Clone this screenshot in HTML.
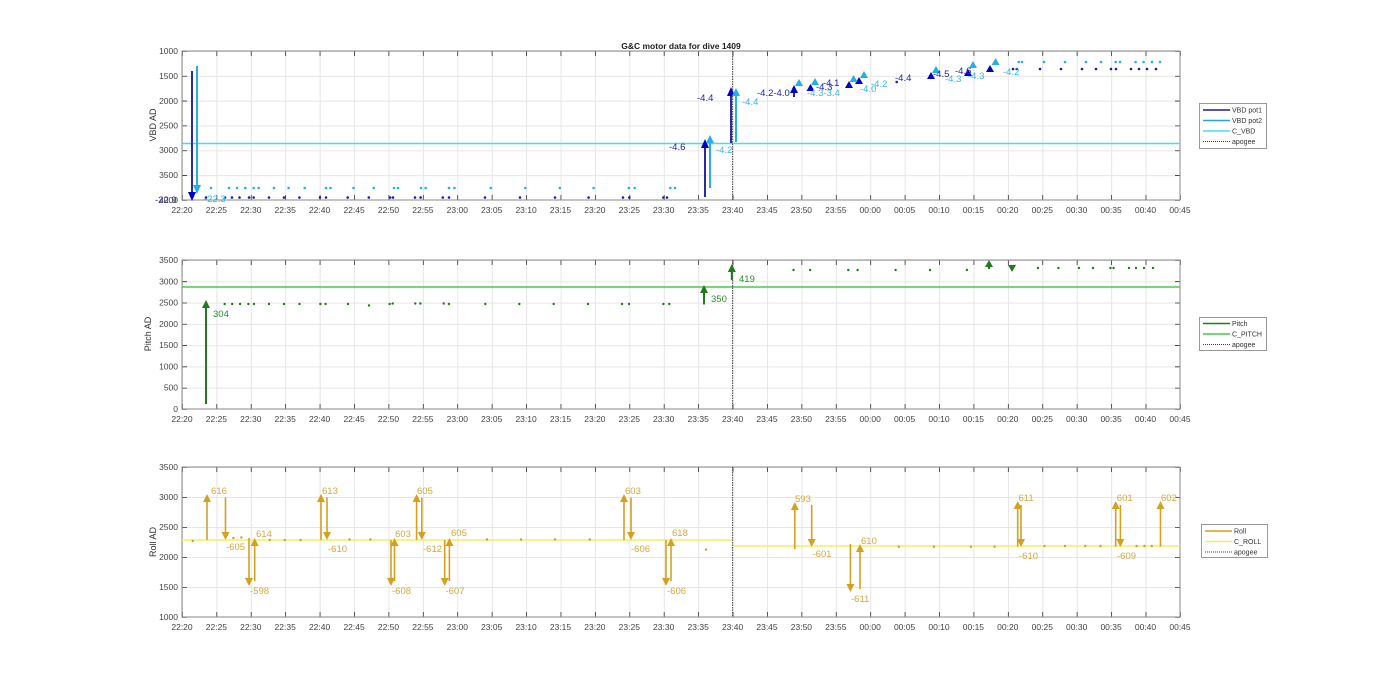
<!DOCTYPE html>
<html><head><meta charset="utf-8"><style>
html,body{margin:0;padding:0;background:#fff;}
svg{display:block;font-family:"Liberation Sans",sans-serif;}
.t{font-size:8.5px;fill:#444;text-anchor:middle}
.yl{font-size:8.5px;fill:#444;text-anchor:end}
.g{stroke:#e4e4e4;stroke-width:1}
</style></head><body>
<svg width="1400" height="693" viewBox="0 0 1400 693" xmlns="http://www.w3.org/2000/svg">
<defs>
<pattern id="vg" x="182" y="0" width="34.4138" height="693" patternUnits="userSpaceOnUse"><line x1="0.5" y1="0" x2="0.5" y2="693" stroke="#e6e6e6" stroke-width="1"/></pattern>
<pattern id="hg1" x="0" y="51" width="1400" height="24.833" patternUnits="userSpaceOnUse"><line x1="0" y1="0.5" x2="1400" y2="0.5" stroke="#e6e6e6"/></pattern>
<pattern id="hg2" x="0" y="260" width="1400" height="21.286" patternUnits="userSpaceOnUse"><line x1="0" y1="0.5" x2="1400" y2="0.5" stroke="#e6e6e6"/></pattern>
<pattern id="hg3" x="0" y="467" width="1400" height="30" patternUnits="userSpaceOnUse"><line x1="0" y1="0.5" x2="1400" y2="0.5" stroke="#e6e6e6"/></pattern>
</defs>
<rect width="1400" height="693" fill="#fff"/>

<!-- ===== TOP AXES ===== -->
<rect x="182" y="51" width="998" height="149" fill="url(#vg)"/>
<rect x="182" y="51" width="998" height="149" fill="url(#hg1)"/>
<line x1="182" y1="197.5" x2="1181" y2="197.5" stroke="#333" stroke-width="5" stroke-dasharray="0.8 33.6138"/>
<line x1="182" y1="53.5" x2="1181" y2="53.5" stroke="#333" stroke-width="5" stroke-dasharray="0.8 33.6138"/>
<line x1="184.5" y1="51" x2="184.5" y2="201" stroke="#333" stroke-width="5" stroke-dasharray="0.8 24.033"/>
<line x1="1177.5" y1="51" x2="1177.5" y2="201" stroke="#333" stroke-width="5" stroke-dasharray="0.8 24.033"/>
<rect x="182" y="51" width="998" height="149" fill="none" stroke="#8a8a8a" stroke-width="1"/>
<text x="681" y="49" font-size="8.5" font-weight="bold" fill="#222" text-anchor="middle">G&amp;C motor data for dive 1409</text>
<line x1="182" y1="143.5" x2="1180" y2="143.5" stroke="#40e0e8" stroke-width="1.5"/>
<line x1="732.6" y1="51" x2="732.6" y2="200" stroke="#444" stroke-width="1" stroke-dasharray="1.5 1"/>
<g fill="#1c1c9c">
<circle cx="206" cy="197.5" r="1.3"/><circle cx="225" cy="197.5" r="1.3"/><circle cx="232" cy="197.5" r="1.3"/><circle cx="239.5" cy="197.5" r="1.3"/><circle cx="249" cy="197.5" r="1.3"/><circle cx="253.7" cy="197.5" r="1.3"/><circle cx="269" cy="197.5" r="1.3"/><circle cx="284" cy="197.5" r="1.3"/><circle cx="299.4" cy="197.5" r="1.3"/><circle cx="320" cy="197.5" r="1.3"/><circle cx="326" cy="197.5" r="1.3"/><circle cx="347.7" cy="197.5" r="1.3"/><circle cx="368.8" cy="197.5" r="1.3"/><circle cx="390" cy="197.5" r="1.3"/><circle cx="393" cy="197.5" r="1.3"/><circle cx="415" cy="197.5" r="1.3"/><circle cx="420.6" cy="197.5" r="1.3"/><circle cx="442.8" cy="197.5" r="1.3"/><circle cx="449" cy="197.5" r="1.3"/><circle cx="485" cy="197.5" r="1.3"/><circle cx="520" cy="197.5" r="1.3"/><circle cx="555" cy="197.5" r="1.3"/><circle cx="588.6" cy="197.5" r="1.3"/><circle cx="623" cy="197.5" r="1.3"/><circle cx="629.3" cy="197.5" r="1.3"/><circle cx="663.4" cy="197.5" r="1.3"/><circle cx="667" cy="197.5" r="1.3"/>
<circle cx="896.7" cy="82" r="1.3"/>
<circle cx="1013" cy="69" r="1.3"/><circle cx="1016.8" cy="69" r="1.3"/><circle cx="1040" cy="69" r="1.3"/><circle cx="1061" cy="69" r="1.3"/><circle cx="1082" cy="69" r="1.3"/><circle cx="1096" cy="69" r="1.3"/><circle cx="1111" cy="69" r="1.3"/><circle cx="1116" cy="69" r="1.3"/><circle cx="1131" cy="69" r="1.3"/><circle cx="1139" cy="69" r="1.3"/><circle cx="1147" cy="69" r="1.3"/><circle cx="1156" cy="69" r="1.3"/>
</g>
<g fill="#22b0e8">
<circle cx="211" cy="188" r="1.3"/><circle cx="229" cy="188" r="1.3"/><circle cx="237" cy="188" r="1.3"/><circle cx="245.3" cy="188" r="1.3"/><circle cx="253.7" cy="188" r="1.3"/><circle cx="258.7" cy="188" r="1.3"/><circle cx="274" cy="188" r="1.3"/><circle cx="288.6" cy="188" r="1.3"/><circle cx="304.7" cy="188" r="1.3"/><circle cx="326" cy="188" r="1.3"/><circle cx="330.5" cy="188" r="1.3"/><circle cx="353.5" cy="188" r="1.3"/><circle cx="373.8" cy="188" r="1.3"/><circle cx="394" cy="188" r="1.3"/><circle cx="398" cy="188" r="1.3"/><circle cx="421" cy="188" r="1.3"/><circle cx="425.6" cy="188" r="1.3"/><circle cx="449" cy="188" r="1.3"/><circle cx="454.5" cy="188" r="1.3"/><circle cx="490.8" cy="188" r="1.3"/><circle cx="525.3" cy="188" r="1.3"/><circle cx="559.8" cy="188" r="1.3"/><circle cx="593.6" cy="188" r="1.3"/><circle cx="628.9" cy="188" r="1.3"/><circle cx="634.7" cy="188" r="1.3"/><circle cx="670.4" cy="188" r="1.3"/><circle cx="675" cy="188" r="1.3"/>
<circle cx="1018.7" cy="62" r="1.3"/><circle cx="1022" cy="62" r="1.3"/><circle cx="1044" cy="62" r="1.3"/><circle cx="1065" cy="62" r="1.3"/><circle cx="1086" cy="62" r="1.3"/><circle cx="1101" cy="62" r="1.3"/><circle cx="1115.7" cy="62" r="1.3"/><circle cx="1120" cy="62" r="1.3"/><circle cx="1135.6" cy="62" r="1.3"/><circle cx="1143.6" cy="62" r="1.3"/><circle cx="1152" cy="62" r="1.3"/><circle cx="1160" cy="62" r="1.3"/>
</g>
<!-- VBD arrows -->
<g stroke="#2a2aa8" stroke-width="2">
<line x1="192" y1="71" x2="192" y2="193"/>
<line x1="705" y1="197" x2="705" y2="147"/>
<line x1="731" y1="143" x2="731" y2="95"/>
<line x1="794" y1="97" x2="794" y2="92"/>
</g>
<g stroke="#22b0e8" stroke-width="2">
<line x1="197" y1="66" x2="197" y2="186"/>
<line x1="710" y1="188" x2="710" y2="142"/>
<line x1="736" y1="142" x2="736" y2="95"/>
</g>
<g fill="#0000c8">
<polygon points="188,192 192,201 196,192"/>
<polygon points="701,148 705,139 709,148"/>
<polygon points="727,96 731,87 735,96"/>
<polygon points="790,93 794,85 798,93"/>
<polygon points="806.5,91 810.5,84 814.5,91"/>
<polygon points="845,88 849,81 853,88"/>
<polygon points="855,84 859,77 863,84"/>
<polygon points="927,79 931,72 935,79"/>
<polygon points="964,76 968,69 972,76"/>
<polygon points="986,72 990,65 994,72"/>
</g>
<g fill="#22b0e8">
<polygon points="193,185 197,194 201,185"/>
<polygon points="706,143 710,135 714,143"/>
<polygon points="732,96 736,88 740,96"/>
<polygon points="795,86 799,79 803,86"/>
<polygon points="811,85 815,78 819,85"/>
<polygon points="849.6,82 853.6,75 857.6,82"/>
<polygon points="860,78 864,71 868,78"/>
<polygon points="932,73 936,66 940,73"/>
<polygon points="969,68 973,61 977,68"/>
<polygon points="991.6,65 995.6,58 999.6,65"/>
</g>
<g font-size="9.5" fill="#2020b0">
<text x="155" y="203">-22.9</text>
<text x="669" y="150">-4.6</text>
<text x="697" y="101">-4.4</text>
<text x="757" y="96">-4.2-4.0</text>
<text x="816" y="90">-4.3</text>
<text x="823" y="86">-4.1</text>
<text x="895" y="81">-4.4</text>
<text x="933" y="77">-4.5</text>
<text x="955" y="74">-4.6</text>
</g>
<g font-size="9.5" fill="#30b8ec">
<text x="204" y="202">-22.3</text>
<text x="716" y="153">-4.2</text>
<text x="742" y="105">-4.4</text>
<text x="807" y="96">-4.3-3.4</text>
<text x="860" y="92">-4.0</text>
<text x="871" y="87">-4.2</text>
<text x="945" y="82">-4.3</text>
<text x="968" y="79">-4.3</text>
<text x="1003" y="75">-4.2</text>
</g>
<text x="0" y="0" font-size="9" fill="#333" text-anchor="middle" transform="translate(156,125) rotate(-90)">VBD AD</text>
<g class="yl">
<text x="178" y="54">1000</text><text x="178" y="79">1500</text><text x="178" y="104">2000</text><text x="178" y="128.5">2500</text><text x="178" y="153">3000</text><text x="178" y="178">3500</text><text x="178" y="203">4000</text>
</g>

<!-- legend 1 -->
<rect x="1199.5" y="103.5" width="67" height="45" fill="#fff" stroke="#999"/>
<line x1="1203" y1="110" x2="1230" y2="110" stroke="#1c1c8c" stroke-width="1.5"/>
<line x1="1203" y1="120.5" x2="1230" y2="120.5" stroke="#2aa0e0" stroke-width="1.5"/>
<line x1="1203" y1="131" x2="1230" y2="131" stroke="#40e0e8" stroke-width="1.5"/>
<line x1="1203" y1="141.5" x2="1230" y2="141.5" stroke="#444" stroke-width="1" stroke-dasharray="1 1"/>
<g font-size="7" fill="#333"><text x="1232" y="112.5">VBD pot1</text><text x="1232" y="123">VBD pot2</text><text x="1232" y="133.5">C_VBD</text><text x="1232" y="144">apogee</text></g>

<!-- ===== MIDDLE AXES ===== -->
<rect x="182" y="260" width="998" height="149" fill="url(#vg)"/>
<rect x="182" y="260" width="998" height="149" fill="url(#hg2)"/>
<line x1="182" y1="406.5" x2="1181" y2="406.5" stroke="#333" stroke-width="5" stroke-dasharray="0.8 33.6138"/>
<line x1="182" y1="262.5" x2="1181" y2="262.5" stroke="#333" stroke-width="5" stroke-dasharray="0.8 33.6138"/>
<line x1="184.5" y1="260" x2="184.5" y2="410" stroke="#333" stroke-width="5" stroke-dasharray="0.8 20.486"/>
<line x1="1177.5" y1="260" x2="1177.5" y2="410" stroke="#333" stroke-width="5" stroke-dasharray="0.8 20.486"/>
<rect x="182" y="260" width="998" height="149" fill="none" stroke="#8a8a8a" stroke-width="1"/>
<line x1="182" y1="287" x2="1180" y2="287" stroke="#40d040" stroke-width="1.5"/>
<line x1="732.6" y1="260" x2="732.6" y2="409" stroke="#444" stroke-width="1" stroke-dasharray="1.5 1"/>
<g fill="#1e7b1e">
<circle cx="224.7" cy="304" r="1.2"/><circle cx="232.2" cy="304" r="1.2"/><circle cx="240.1" cy="304" r="1.2"/><circle cx="248.4" cy="304" r="1.2"/><circle cx="254" cy="304" r="1.2"/><circle cx="269" cy="304" r="1.2"/><circle cx="284" cy="304" r="1.2"/><circle cx="299.5" cy="304" r="1.2"/><circle cx="320.4" cy="304" r="1.2"/><circle cx="325.6" cy="304" r="1.2"/><circle cx="348" cy="304" r="1.2"/><circle cx="369" cy="305.5" r="1.2"/><circle cx="389.6" cy="304" r="1.2"/><circle cx="392.7" cy="303.5" r="1.2"/><circle cx="415.3" cy="303.5" r="1.2"/><circle cx="420.4" cy="303.5" r="1.2"/><circle cx="443.7" cy="303.5" r="1.2"/><circle cx="448.9" cy="304" r="1.2"/><circle cx="485.3" cy="304" r="1.2"/><circle cx="519.3" cy="304" r="1.2"/><circle cx="553.7" cy="304" r="1.2"/><circle cx="588" cy="304" r="1.2"/><circle cx="622" cy="304" r="1.2"/><circle cx="629" cy="304" r="1.2"/><circle cx="663.4" cy="304" r="1.2"/><circle cx="669.3" cy="304" r="1.2"/>
<circle cx="793.5" cy="270" r="1.2"/><circle cx="810.2" cy="270" r="1.2"/><circle cx="848.3" cy="270" r="1.2"/><circle cx="857.6" cy="270" r="1.2"/><circle cx="895.6" cy="270" r="1.2"/><circle cx="930" cy="270" r="1.2"/><circle cx="966.9" cy="270" r="1.2"/><circle cx="1038" cy="268" r="1.2"/><circle cx="1058.4" cy="268" r="1.2"/><circle cx="1079" cy="268" r="1.2"/><circle cx="1093" cy="268" r="1.2"/><circle cx="1110.4" cy="268" r="1.2"/><circle cx="1113.6" cy="268" r="1.2"/><circle cx="1129" cy="268" r="1.2"/><circle cx="1136" cy="268" r="1.2"/><circle cx="1144" cy="268" r="1.2"/><circle cx="1153" cy="268" r="1.2"/>
</g>
<g stroke="#1e7b1e" stroke-width="2">
<line x1="206" y1="404" x2="206" y2="306"/>
<line x1="704" y1="304.5" x2="704" y2="291"/>
<line x1="731.8" y1="280" x2="731.8" y2="270"/>
<line x1="989" y1="269" x2="989" y2="266"/>
</g>
<g fill="#1e7b1e">
<polygon points="202,308 206,300 210,308"/>
<polygon points="700,293 704,285 708,293"/>
<polygon points="727.8,272 731.8,264 735.8,272"/>
<polygon points="985,267 989,260 993,267"/>
<polygon points="1008,265 1012,272 1016,265"/>
<polygon points="1010,264 1013,268 1016,264 1013,270"/>
</g>
<g font-size="9.5" fill="#2e8b2e">
<text x="213" y="317">304</text><text x="711" y="302">350</text><text x="739" y="282">419</text>
</g>
<text x="0" y="0" font-size="9" fill="#333" text-anchor="middle" transform="translate(151,334) rotate(-90)">Pitch AD</text>
<g class="yl">
<text x="178" y="263">3500</text><text x="178" y="284.3">3000</text><text x="178" y="305.6">2500</text><text x="178" y="327">2000</text><text x="178" y="348">1500</text><text x="178" y="369.4">1000</text><text x="178" y="390.7">500</text><text x="178" y="412">0</text>
</g>
<rect x="1199.5" y="317.5" width="67" height="33" fill="#fff" stroke="#999"/>
<line x1="1203" y1="323.5" x2="1230" y2="323.5" stroke="#1e7b1e" stroke-width="1.5"/>
<line x1="1203" y1="334" x2="1230" y2="334" stroke="#40d040" stroke-width="1.5"/>
<line x1="1203" y1="344.5" x2="1230" y2="344.5" stroke="#444" stroke-width="1" stroke-dasharray="1 1"/>
<g font-size="7" fill="#333"><text x="1232" y="326">Pitch</text><text x="1232" y="336.5">C_PITCH</text><text x="1232" y="347">apogee</text></g>

<!-- ===== BOTTOM AXES ===== -->
<rect x="182" y="467" width="998" height="150" fill="url(#vg)"/>
<rect x="182" y="467" width="998" height="150" fill="url(#hg3)"/>
<line x1="182" y1="614.5" x2="1181" y2="614.5" stroke="#333" stroke-width="5" stroke-dasharray="0.8 33.6138"/>
<line x1="182" y1="469.5" x2="1181" y2="469.5" stroke="#333" stroke-width="5" stroke-dasharray="0.8 33.6138"/>
<line x1="184.5" y1="467" x2="184.5" y2="618" stroke="#333" stroke-width="5" stroke-dasharray="0.8 29.2"/>
<line x1="1177.5" y1="467" x2="1177.5" y2="618" stroke="#333" stroke-width="5" stroke-dasharray="0.8 29.2"/>
<rect x="182" y="467" width="998" height="150" fill="none" stroke="#8a8a8a" stroke-width="1"/>
<line x1="182" y1="540" x2="732.6" y2="540" stroke="#f5ee60" stroke-width="1.5"/>
<line x1="732.6" y1="546" x2="1180" y2="546" stroke="#f5ee60" stroke-width="1.5"/>
<line x1="732.6" y1="467" x2="732.6" y2="617" stroke="#444" stroke-width="1" stroke-dasharray="1.5 1"/>
<g fill="#c8a030">
<circle cx="192.7" cy="541" r="1.2"/><circle cx="233.4" cy="538" r="1.2"/><circle cx="241.3" cy="537.5" r="1.2"/><circle cx="269.7" cy="540" r="1.2"/><circle cx="284.7" cy="540" r="1.2"/><circle cx="300.5" cy="540" r="1.2"/><circle cx="349.5" cy="539.5" r="1.2"/><circle cx="370.4" cy="539.5" r="1.2"/><circle cx="487" cy="539.5" r="1.2"/><circle cx="521" cy="539.5" r="1.2"/><circle cx="555" cy="539.5" r="1.2"/><circle cx="589.8" cy="539.5" r="1.2"/><circle cx="706" cy="549.6" r="1.2"/>
<circle cx="898.8" cy="546.7" r="1.2"/><circle cx="933.9" cy="546.7" r="1.2"/><circle cx="971" cy="546.7" r="1.2"/><circle cx="994.6" cy="546.7" r="1.2"/><circle cx="1044.5" cy="546" r="1.2"/><circle cx="1065" cy="546" r="1.2"/><circle cx="1085.3" cy="546" r="1.2"/><circle cx="1100.5" cy="546" r="1.2"/><circle cx="1136.6" cy="546" r="1.2"/><circle cx="1144.5" cy="546" r="1.2"/><circle cx="1151.8" cy="546" r="1.2"/>
</g>
<g stroke="#d4a020" stroke-width="1.6">
<!-- up arrows -->
<line x1="207" y1="540" x2="207" y2="499"/>
<line x1="254.7" y1="581" x2="254.7" y2="543"/>
<line x1="321" y1="540" x2="321" y2="499"/>
<line x1="394.5" y1="581" x2="394.5" y2="543"/>
<line x1="416.6" y1="540" x2="416.6" y2="499"/>
<line x1="449.4" y1="581" x2="449.4" y2="543"/>
<line x1="624" y1="540" x2="624" y2="499"/>
<line x1="671" y1="581" x2="671" y2="543"/>
<line x1="794.8" y1="549" x2="794.8" y2="507"/>
<line x1="860" y1="589" x2="860" y2="549"/>
<line x1="1017.7" y1="546.7" x2="1017.7" y2="506"/>
<line x1="1115.7" y1="546.7" x2="1115.7" y2="506"/>
<line x1="1160.5" y1="546.7" x2="1160.5" y2="506"/>
<!-- down arrows -->
<line x1="225.5" y1="497.5" x2="225.5" y2="535"/>
<line x1="249" y1="538" x2="249" y2="581"/>
<line x1="327" y1="497.5" x2="327" y2="535"/>
<line x1="391" y1="540" x2="391" y2="581"/>
<line x1="421.8" y1="497.5" x2="421.8" y2="535"/>
<line x1="444.7" y1="540" x2="444.7" y2="581"/>
<line x1="631" y1="497.5" x2="631" y2="535"/>
<line x1="666" y1="540" x2="666" y2="581"/>
<line x1="811.7" y1="505" x2="811.7" y2="542"/>
<line x1="850.4" y1="544" x2="850.4" y2="587"/>
<line x1="1021" y1="505" x2="1021" y2="542"/>
<line x1="1120.4" y1="505" x2="1120.4" y2="542"/>
</g>
<g fill="#d4a020">
<polygon points="203,502 207,494 211,502"/>
<polygon points="250.7,546 254.7,538 258.7,546"/>
<polygon points="317,502 321,494 325,502"/>
<polygon points="390.5,546 394.5,538 398.5,546"/>
<polygon points="412.6,502 416.6,494 420.6,502"/>
<polygon points="445.4,546 449.4,538 453.4,546"/>
<polygon points="620,502 624,494 628,502"/>
<polygon points="667,546 671,538 675,546"/>
<polygon points="790.8,510 794.8,502 798.8,510"/>
<polygon points="856,552 860,544 864,552"/>
<polygon points="1013.7,509 1017.7,501 1021.7,509"/>
<polygon points="1111.7,509 1115.7,501 1119.7,509"/>
<polygon points="1156.5,509 1160.5,501 1164.5,509"/>
<polygon points="221.5,532 225.5,540 229.5,532"/>
<polygon points="245,578 249,586 253,578"/>
<polygon points="323,532 327,540 331,532"/>
<polygon points="387,578 391,586 395,578"/>
<polygon points="417.8,532 421.8,540 425.8,532"/>
<polygon points="440.7,578 444.7,586 448.7,578"/>
<polygon points="627,532 631,540 635,532"/>
<polygon points="662,578 666,586 670,578"/>
<polygon points="807.7,539 811.7,547 815.7,539"/>
<polygon points="846.4,584 850.4,592 854.4,584"/>
<polygon points="1017,539 1021,547 1025,539"/>
<polygon points="1116.4,539 1120.4,547 1124.4,539"/>
</g>
<g font-size="9.5" fill="#d4a840">
<text x="211" y="494">616</text><text x="226" y="550">-605</text><text x="250" y="594">-598</text><text x="256" y="537">614</text>
<text x="322" y="494">613</text><text x="328" y="552">-610</text><text x="392" y="594">-608</text><text x="395" y="537">603</text>
<text x="417" y="494">605</text><text x="423" y="552">-612</text><text x="445.5" y="594">-607</text><text x="451" y="536">605</text>
<text x="625" y="494">603</text><text x="631" y="552">-606</text><text x="667" y="594">-606</text><text x="672" y="536">618</text>
<text x="795" y="502">593</text><text x="812.5" y="557">-601</text><text x="851" y="602">-611</text><text x="861" y="544">610</text>
<text x="1018.5" y="501">611</text><text x="1019" y="559">-610</text><text x="1116.8" y="501">601</text><text x="1117" y="559">-609</text><text x="1161" y="501">602</text>
</g>
<text x="0" y="0" font-size="9" fill="#333" text-anchor="middle" transform="translate(156,542) rotate(-90)">Roll AD</text>
<g class="yl">
<text x="178" y="470">3500</text><text x="178" y="500">3000</text><text x="178" y="530">2500</text><text x="178" y="560">2000</text><text x="178" y="590">1500</text><text x="178" y="620">1000</text>
</g>
<rect x="1201.5" y="524.5" width="66" height="33" fill="#fff" stroke="#999"/>
<line x1="1205" y1="531" x2="1232" y2="531" stroke="#d4a020" stroke-width="1.5"/>
<line x1="1205" y1="541.5" x2="1232" y2="541.5" stroke="#f5ee60" stroke-width="1.5"/>
<line x1="1205" y1="552" x2="1232" y2="552" stroke="#444" stroke-width="1" stroke-dasharray="1 1"/>
<g font-size="7" fill="#333"><text x="1234" y="533.5">Roll</text><text x="1234" y="544">C_ROLL</text><text x="1234" y="554.5">apogee</text></g>

<!-- x tick labels -->
<g class="t">
<text x="182" y="213">22:20</text><text x="216.4" y="213">22:25</text><text x="250.8" y="213">22:30</text><text x="285.2" y="213">22:35</text><text x="319.6" y="213">22:40</text><text x="354.1" y="213">22:45</text><text x="388.5" y="213">22:50</text><text x="422.9" y="213">22:55</text><text x="457.3" y="213">23:00</text><text x="491.7" y="213">23:05</text><text x="526.1" y="213">23:10</text><text x="560.5" y="213">23:15</text><text x="594.9" y="213">23:20</text><text x="629.3" y="213">23:25</text><text x="663.7" y="213">23:30</text><text x="698.2" y="213">23:35</text><text x="732.6" y="213">23:40</text><text x="767" y="213">23:45</text><text x="801.4" y="213">23:50</text><text x="835.8" y="213">23:55</text><text x="870.2" y="213">00:00</text><text x="904.6" y="213">00:05</text><text x="939" y="213">00:10</text><text x="973.4" y="213">00:15</text><text x="1007.8" y="213">00:20</text><text x="1042.3" y="213">00:25</text><text x="1076.7" y="213">00:30</text><text x="1111.1" y="213">00:35</text><text x="1145.5" y="213">00:40</text><text x="1180" y="213">00:45</text>
</g>
<g class="t">
<text x="182" y="422">22:20</text><text x="216.4" y="422">22:25</text><text x="250.8" y="422">22:30</text><text x="285.2" y="422">22:35</text><text x="319.6" y="422">22:40</text><text x="354.1" y="422">22:45</text><text x="388.5" y="422">22:50</text><text x="422.9" y="422">22:55</text><text x="457.3" y="422">23:00</text><text x="491.7" y="422">23:05</text><text x="526.1" y="422">23:10</text><text x="560.5" y="422">23:15</text><text x="594.9" y="422">23:20</text><text x="629.3" y="422">23:25</text><text x="663.7" y="422">23:30</text><text x="698.2" y="422">23:35</text><text x="732.6" y="422">23:40</text><text x="767" y="422">23:45</text><text x="801.4" y="422">23:50</text><text x="835.8" y="422">23:55</text><text x="870.2" y="422">00:00</text><text x="904.6" y="422">00:05</text><text x="939" y="422">00:10</text><text x="973.4" y="422">00:15</text><text x="1007.8" y="422">00:20</text><text x="1042.3" y="422">00:25</text><text x="1076.7" y="422">00:30</text><text x="1111.1" y="422">00:35</text><text x="1145.5" y="422">00:40</text><text x="1180" y="422">00:45</text>
</g>
<g class="t">
<text x="182" y="630">22:20</text><text x="216.4" y="630">22:25</text><text x="250.8" y="630">22:30</text><text x="285.2" y="630">22:35</text><text x="319.6" y="630">22:40</text><text x="354.1" y="630">22:45</text><text x="388.5" y="630">22:50</text><text x="422.9" y="630">22:55</text><text x="457.3" y="630">23:00</text><text x="491.7" y="630">23:05</text><text x="526.1" y="630">23:10</text><text x="560.5" y="630">23:15</text><text x="594.9" y="630">23:20</text><text x="629.3" y="630">23:25</text><text x="663.7" y="630">23:30</text><text x="698.2" y="630">23:35</text><text x="732.6" y="630">23:40</text><text x="767" y="630">23:45</text><text x="801.4" y="630">23:50</text><text x="835.8" y="630">23:55</text><text x="870.2" y="630">00:00</text><text x="904.6" y="630">00:05</text><text x="939" y="630">00:10</text><text x="973.4" y="630">00:15</text><text x="1007.8" y="630">00:20</text><text x="1042.3" y="630">00:25</text><text x="1076.7" y="630">00:30</text><text x="1111.1" y="630">00:35</text><text x="1145.5" y="630">00:40</text><text x="1180" y="630">00:45</text>
</g>
</svg>
</body></html>
